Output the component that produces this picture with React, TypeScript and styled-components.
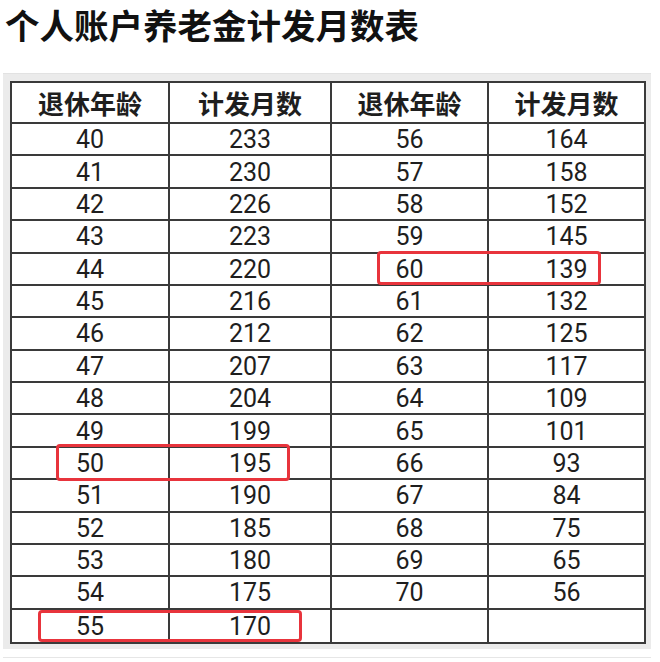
import React from "react";
import styled, { createGlobalStyle } from "styled-components";

const Global = createGlobalStyle`
  html, body { margin: 0; padding: 0; background: #ffffff; }
  body { font-family: Roboto, "Noto Sans CJK SC", sans-serif; }
`;

const Page = styled.div`
  width: 660px;
  height: 662px;
  overflow: hidden;
  background: #ffffff;
`;

const Title = styled.h1`
  margin: 0 0 23px 0;
  padding-left: 5px;
  height: 50px;
  line-height: 48px;
  font-family: "Noto Sans CJK SC", sans-serif;
  font-size: 34.5px;
  font-weight: 700;
  color: #111111;
`;

const Frame = styled.div`
  margin-left: 3px;
  width: 648px;
  box-sizing: border-box;
  padding: 7px 5px 5px 7px;
  background: #ebebeb;
  border-top: 1px solid #e2e2e2;
`;

const TableWrap = styled.div`
  position: relative;
  width: 636px;
`;

const Grid = styled.div`
  display: grid;
  grid-template-columns: 158px 162px 157px 1fr;
  grid-template-rows: 41px repeat(16, 1fr);
  width: 636px;
  height: 563px;
  box-sizing: border-box;
  border: 2px solid #3a3a3a;
  background: #ffffff;
`;

const Cell = styled.div<{ $lastCol: boolean; $lastRow: boolean; $head?: boolean }>`
  display: flex;
  align-items: center;
  justify-content: center;
  box-sizing: border-box;
  border-right: ${(p) => (p.$lastCol ? "none" : "2px solid #3a3a3a")};
  border-bottom: ${(p) => (p.$lastRow ? "none" : "2px solid #3a3a3a")};
  font-family: ${(p) => (p.$head ? '"Noto Sans CJK SC", sans-serif' : 'Roboto, "Noto Sans CJK SC", sans-serif')};
  font-size: ${(p) => (p.$head ? "26px" : "25px")};
  font-weight: ${(p) => (p.$head ? 700 : 400)};
  color: #1e1e1e;
  line-height: 1;
  padding-top: ${(p) => (p.$head ? "0px" : "1px")};
`;

const Highlight = styled.div`
  position: absolute;
  box-sizing: border-box;
  border: 3px solid #e8343c;
  border-radius: 4px;
  pointer-events: none;
`;

const BottomLine = styled.div`
  margin-top: 8px;
  margin-left: 3px;
  width: 648px;
  height: 1px;
  background: #e6e6e6;
`;

const left: [number, number][] = [
  [40, 233], [41, 230], [42, 226], [43, 223], [44, 220], [45, 216], [46, 212], [47, 207],
  [48, 204], [49, 199], [50, 195], [51, 190], [52, 185], [53, 180], [54, 175], [55, 170],
];
const right: ([number, number] | null)[] = [
  [56, 164], [57, 158], [58, 152], [59, 145], [60, 139], [61, 132], [62, 125], [63, 117],
  [64, 109], [65, 101], [66, 93], [67, 84], [68, 75], [69, 65], [70, 56], null,
];

const highlights = [
  { x: 46, y: 363, w: 234, h: 37 },
  { x: 28, y: 529, w: 264, h: 32 },
  { x: 367, y: 170, w: 224, h: 34 },
];

export default function App() {
  const headers = ["退休年龄", "计发月数", "退休年龄", "计发月数"];
  const rows: string[][] = left.map((l, i) => {
    const r = right[i];
    return [String(l[0]), String(l[1]), r ? String(r[0]) : "", r ? String(r[1]) : ""];
  });
  return (
    <Page>
      <Global />
      <Title>个人账户养老金计发月数表</Title>
      <Frame>
        <TableWrap>
          <Grid>
            {headers.map((h, c) => (
              <Cell key={"h" + c} $head $lastCol={c === 3} $lastRow={false}>
                {h}
              </Cell>
            ))}
            {rows.map((row, r) =>
              row.map((v, c) => (
                <Cell key={r + "-" + c} $lastCol={c === 3} $lastRow={r === rows.length - 1}>
                  {v}
                </Cell>
              ))
            )}
          </Grid>
          {highlights.map((b, i) => (
            <Highlight
              key={i}
              style={{ left: b.x, top: b.y, width: b.w, height: b.h }}
            />
          ))}
        </TableWrap>
      </Frame>
      <BottomLine />
    </Page>
  );
}
